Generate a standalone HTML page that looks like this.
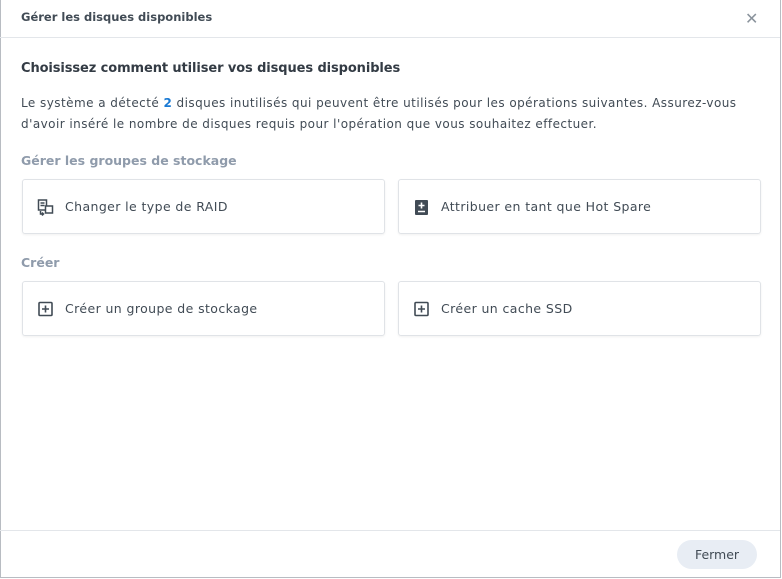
<!DOCTYPE html>
<html><head><meta charset="utf-8"><style>
*{box-sizing:border-box;margin:0;padding:0}
html,body{width:782px;height:579px;background:#fff;overflow:hidden;font-family:"DejaVu Sans",Verdana,sans-serif;color:#414b55}
.win{position:absolute;left:0;top:0;width:781px;height:578px;border:1px solid #b8bcc2;border-top:none}
.hdr{position:absolute;left:0;top:0;width:780px;height:38px;border-bottom:1px solid #e3e6ea}
.hdr .t{position:absolute;left:21px;top:10px;font-size:11.5px;font-weight:bold;color:#414b55}
.x{position:absolute;left:745px;top:9px;font-size:16px;color:#8a939c;font-weight:bold}
.h1{position:absolute;left:21px;top:61px;font-size:13px;font-weight:bold;color:#333b44;letter-spacing:-0.1px}
.p{position:absolute;left:21px;top:93px;font-size:12px;line-height:21px;color:#414b55;width:760px;letter-spacing:0.45px}
.p b{color:#1a7ad4}
.sec{position:absolute;left:21px;font-size:12.5px;font-weight:bold;color:#8f9bab}
.card{position:absolute;width:363px;height:55px;border:1px solid #e0e3e7;border-radius:3px;box-shadow:0 1px 2px rgba(0,0,0,.06);font-size:12.5px;color:#414b55;letter-spacing:0.4px}
.card span{position:absolute;left:42px;top:19px}
.card svg{position:absolute;left:14px;top:19px}
.ft{position:absolute;left:0;top:530px;width:780px;border-top:1px solid #e3e6ea}
.btn{position:absolute;left:677px;top:540px;width:80px;height:29px;border-radius:15px;background:#e8edf4;font-size:12.5px;text-align:center;line-height:29px;color:#414b55}
</style></head><body>
<div class="win"></div>
<div class="hdr"><div class="t">Gérer les disques disponibles</div><div class="x">✕</div></div>
<div class="h1">Choisissez comment utiliser vos disques disponibles</div>
<div class="p">Le système a détecté <b>2</b> disques inutilisés qui peuvent être utilisés pour les opérations suivantes. Assurez-vous<br>d'avoir inséré le nombre de disques requis pour l'opération que vous souhaitez effectuer.</div>
<div class="sec" style="top:153px">Gérer les groupes de stockage</div>
<div class="card" style="left:22px;top:179px"><svg width="18" height="18" viewBox="0 0 18 18" fill="none" stroke="#414b55" stroke-width="1.5"><rect x="1.5" y="1" width="8" height="10"/><path d="M3.5 4h4M3.5 6.5h4"/><rect x="8.5" y="7" width="7" height="7" fill="#fff"/><path d="M3.5 12v3h3M5 13.5l1.5 1.5-1.5 1.5"/></svg><span>Changer le type de RAID</span></div>
<div class="card" style="left:398px;top:179px"><svg width="18" height="18" viewBox="0 0 18 18"><rect x="2" y="1" width="13" height="15" rx="1" fill="#414b55"/><path d="M8.5 3.5v6M5.5 6.5h6M5 12.5h7" stroke="#fff" stroke-width="1.6"/></svg><span>Attribuer en tant que Hot Spare</span></div>
<div class="sec" style="top:255px">Créer</div>
<div class="card" style="left:22px;top:281px"><svg width="18" height="18" viewBox="0 0 18 18" fill="none" stroke="#414b55" stroke-width="1.6"><rect x="2" y="1.5" width="13" height="13" rx="1"/><path d="M8.5 4.5v7M5 8h7"/></svg><span>Créer un groupe de stockage</span></div>
<div class="card" style="left:398px;top:281px"><svg width="18" height="18" viewBox="0 0 18 18" fill="none" stroke="#414b55" stroke-width="1.6"><rect x="2" y="1.5" width="13" height="13" rx="1"/><path d="M8.5 4.5v7M5 8h7"/></svg><span>Créer un cache SSD</span></div>
<div class="ft"></div>
<div class="btn">Fermer</div>
</body></html>
